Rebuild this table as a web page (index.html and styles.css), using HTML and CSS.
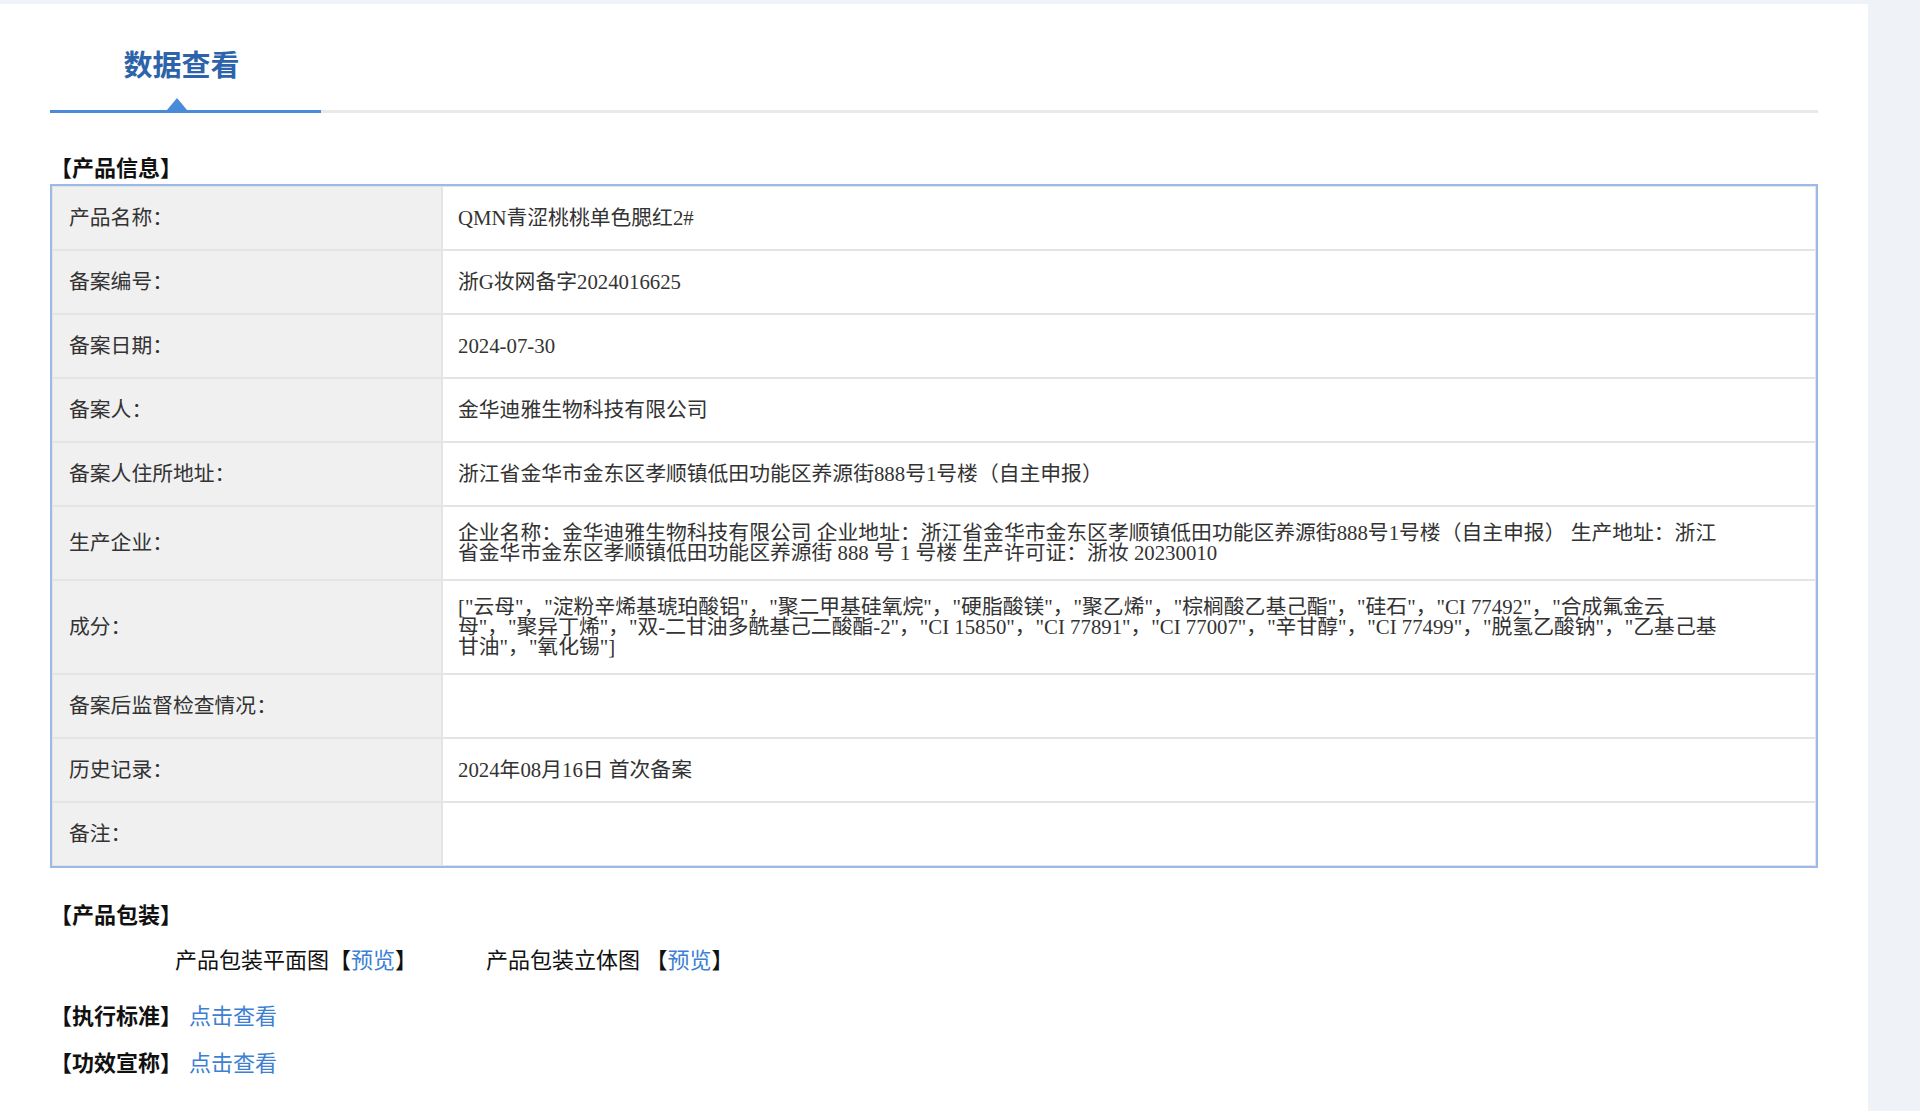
FILE: index.html
```html
<!DOCTYPE html>
<html lang="zh-CN">
<head>
<meta charset="utf-8">
<title>数据查看</title>
<link rel="stylesheet" href="styles.css">
</head>
<body>
<div class="page">
  <main class="panel">
    <div class="tabbar">
      <div class="tab">
        <h1 class="tab-title">数据查看</h1>
        <span class="tab-arrow"></span>
      </div>
      <div class="tab-rest"></div>
    </div>

    <h2 class="section-title">【产品信息】</h2>
    <table class="info">
      <tbody>
        <tr><td class="label">产品名称：</td><td class="value">QMN青涩桃桃单色腮红2#</td></tr>
        <tr><td class="label">备案编号：</td><td class="value">浙G妆网备字2024016625</td></tr>
        <tr><td class="label">备案日期：</td><td class="value">2024-07-30</td></tr>
        <tr><td class="label">备案人：</td><td class="value">金华迪雅生物科技有限公司</td></tr>
        <tr><td class="label">备案人住所地址：</td><td class="value">浙江省金华市金东区孝顺镇低田功能区养源街888号1号楼（自主申报）</td></tr>
        <tr><td class="label">生产企业：</td><td class="value">企业名称：金华迪雅生物科技有限公司 企业地址：浙江省金华市金东区孝顺镇低田功能区养源街888号1号楼（自主申报） 生产地址：浙江<br>省金华市金东区孝顺镇低田功能区养源街 888 号 1 号楼 生产许可证：浙妆 20230010</td></tr>
        <tr><td class="label">成分：</td><td class="value">["云母"，"淀粉辛烯基琥珀酸铝"，"聚二甲基硅氧烷"，"硬脂酸镁"，"聚乙烯"，"棕榈酸乙基己酯"，"硅石"，"CI 77492"，"合成氟金云<br>母"，"聚异丁烯"，"双-二甘油多酰基己二酸酯-2"，"CI 15850"，"CI 77891"，"CI 77007"，"辛甘醇"，"CI 77499"，"脱氢乙酸钠"，"乙基己基<br>甘油"，"氧化锡"]</td></tr>
        <tr><td class="label">备案后监督检查情况：</td><td class="value"></td></tr>
        <tr><td class="label">历史记录：</td><td class="value">2024年08月16日 首次备案</td></tr>
        <tr><td class="label">备注：</td><td class="value"></td></tr>
      </tbody>
    </table>

    <h2 class="section-title pack-title">【产品包装】</h2>
    <div class="pack-row">
      <span class="pack-item">产品包装平面图【<a class="link" href="#">预览</a>】</span>
      <span class="pack-item">产品包装立体图 【<a class="link" href="#">预览</a>】</span>
    </div>

    <div class="line-item first"><span class="line-head">【执行标准】</span><a class="link" href="#">点击查看</a></div>
    <div class="line-item"><span class="line-head">【功效宣称】</span><a class="link" href="#">点击查看</a></div>
  </main>
</div>
</body>
</html>
```

FILE: styles.css
```css
html, body {
  margin: 0;
  padding: 0;
}

body {
  background: #eff2f6;
  font-family: "Liberation Serif", "Noto Sans CJK SC", serif;
  color: #333;
  font-size: 20.8px;
}

.page {
  padding-top: 4px;
}

.panel {
  width: 1768px;
  min-height: 1107px;
  background: #fff;
  padding: 0 50px 0 50px;
  margin-right: 52px;
  box-sizing: content-box;
}

.tabbar {
  display: flex;
  padding-top: 42px;
}

.tab {
  position: relative;
  width: 271px;
  border-bottom: 3px solid #4a8bd9;
  padding-right: 8px;
  box-sizing: border-box;
  text-align: center;
}

.tab-title {
  margin: 0 0 24px 0;
  font-size: 29px;
  line-height: 40px;
  font-weight: 700;
  color: #2d63aa;
}

.tab-arrow {
  position: absolute;
  left: 117px;
  bottom: 0;
  width: 0;
  height: 0;
  border-left: 10.5px solid transparent;
  border-right: 10.5px solid transparent;
  border-bottom: 12px solid #4a8bd9;
}

.tab-rest {
  flex: 1;
  border-bottom: 3px solid #e9e9e9;
}

.section-title {
  margin: 44px 0 3px 0;
  font-size: 22px;
  line-height: 24px;
  font-weight: 700;
  color: #111;
}

.info {
  width: 1768px;
  border: 2px solid #9bbaea;
  border-collapse: separate;
  border-spacing: 0;
  font-size: 20.8px;
  line-height: 20px;
  color: #333;
}

.info tr {
  height: 64px;
}

.info td {
  border: 1px solid #e4e4e4;
  padding: 16px 16px;
  vertical-align: middle;
}

.info td.label {
  width: 356px;
  background: #f0f0f0;
}

.info td.value {
  background: #fff;
  padding-left: 15px;
  padding-right: 30px;
}

.pack-title {
  margin-top: 36px;
  margin-bottom: 0;
}

.pack-row {
  display: flex;
  gap: 69px;
  margin-top: 21px;
  padding-left: 125px;
  font-size: 22px;
  line-height: 24px;
  color: #111;
}

.link {
  color: #3c7fd3;
  text-decoration: none;
}

.line-item {
  margin-top: 23px;
  font-size: 22px;
  line-height: 24px;
  display: flex;
  align-items: baseline;
}

.line-item.first {
  margin-top: 32px;
}

.line-head {
  font-weight: 700;
  color: #111;
  margin-right: 7px;
}
```
